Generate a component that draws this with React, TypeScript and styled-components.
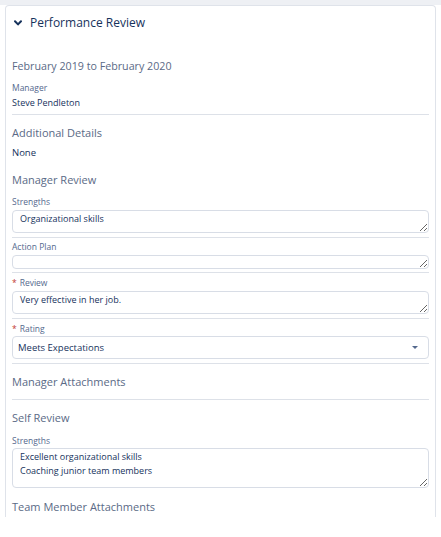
import * as React from 'react'
import styled, { createGlobalStyle } from 'styled-components'

const GlobalStyle = createGlobalStyle`
  html, body {
    margin: 0;
    padding: 0;
    background: #ffffff;
  }
  body {
    font-family: "Open Sans", "Noto Sans", sans-serif;
    color: #16325c;
  }
`

const TopBand = styled.div`
  background: #eef0f4;
  height: 5px;
`

const Card = styled.section`
  background: #ffffff;
  border: 1px solid #dfe3ea;
  border-bottom: none;
  border-radius: 4px 4px 0 0;
  box-sizing: border-box;
  margin-left: 5px;
  padding: 0 6px 2px 6px;
  width: 431px;
`

const Header = styled.header`
  align-items: center;
  display: flex;
  gap: 8px;
  height: 18px;
  margin: 8px 0 0 2px;
`

const HeaderTitle = styled.h2`
  color: #16325c;
  font-size: 12px;
  font-weight: 400;
  line-height: 18px;
  margin: 0;
`

const Heading = styled.h3<{ $top: number; $size?: number }>`
  color: #5a6a86;
  font-size: ${(p) => p.$size ?? 11}px;
  font-weight: 400;
  line-height: 16px;
  margin: ${(p) => p.$top}px 0 0;
`

const Label = styled.div<{ $top: number }>`
  color: #54698d;
  font-size: 8.5px;
  line-height: 12px;
  margin-top: ${(p) => p.$top}px;
`

const Required = styled.abbr`
  color: #c23934;
  margin-right: 3px;
  text-decoration: none;
`

const Value = styled.div<{ $top: number; $size: number }>`
  color: #16325c;
  font-size: ${(p) => p.$size}px;
  line-height: 14px;
  margin-top: ${(p) => p.$top}px;
`

const Divider = styled.hr<{ $top: number }>`
  border: none;
  border-top: 1px solid #dde1e8;
  margin: ${(p) => p.$top}px 0 0;
`

const TextArea = styled.textarea<{ $height: number; $top: number }>`
  border: 1px solid #d8dde6;
  border-radius: 4px;
  box-sizing: border-box;
  color: #16325c;
  display: block;
  font-family: "Open Sans", "Noto Sans", sans-serif;
  font-size: 9px;
  height: ${(p) => p.$height}px;
  line-height: 14px;
  margin: ${(p) => p.$top}px 0 0;
  outline: none;
  padding: 1px 7px;
  resize: vertical;
  width: 100%;
`

const Select = styled.div`
  align-items: center;
  border: 1px solid #d8dde6;
  border-radius: 4px;
  box-sizing: border-box;
  color: #16325c;
  display: flex;
  font-size: 9.5px;
  height: 23px;
  justify-content: space-between;
  margin-top: 1px;
  padding: 0 10px 0 5px;
`

const Caret = styled.span`
  border-left: 3.5px solid transparent;
  border-right: 3.5px solid transparent;
  border-top: 3.5px solid #54698d;
  height: 0;
  width: 0;
`

const Chevron = () => (
  <svg width="8" height="6" viewBox="0 0 8 6" aria-hidden="true">
    <path d="M1 1.2 L4 4.4 L7 1.2" fill="none" stroke="#16325c" strokeWidth="2" strokeLinecap="round" strokeLinejoin="round" />
  </svg>
)

export default function App() {
  return (
    <>
      <GlobalStyle />
      <TopBand />
      <Card>
        <Header>
          <Chevron />
          <HeaderTitle>Performance Review</HeaderTitle>
        </Header>

        <Heading $top={26} $size={10.7}>February 2019 to February 2020</Heading>
        <Label $top={8}>Manager</Label>
        <Value $top={2} $size={9}>Steve Pendleton</Value>
        <Divider $top={4} />

        <Heading $top={10}>Additional Details</Heading>
        <Value $top={5} $size={9.5}>None</Value>

        <Heading $top={12}>Manager Review</Heading>
        <Label $top={8}>Strengths</Label>
        <TextArea $top={2} $height={23} readOnly value="Organizational skills" />
        <Divider $top={4} />

        <Label $top={3}>Action Plan</Label>
        <TextArea $top={2} $height={14} readOnly value="" />
        <Divider $top={3} />

        <Label $top={4}>
          <Required title="required">*</Required>Review
        </Label>
        <TextArea $top={2} $height={23} readOnly value="Very effective in her job." />
        <Divider $top={4} />

        <Label $top={4}>
          <Required title="required">*</Required>Rating
        </Label>
        <Select>
          Meets Expectations
          <Caret />
        </Select>
        <Divider $top={4} />

        <Heading $top={10}>Manager Attachments</Heading>
        <Divider $top={9} />

        <Heading $top={10}>Self Review</Heading>
        <Label $top={9}>Strengths</Label>
        <TextArea
          $top={1}
          $height={40}
          readOnly
          value={'Excellent organizational skills\nCoaching junior team members'}
        />

        <Heading $top={11}>Team Member Attachments</Heading>
      </Card>
    </>
  )
}
